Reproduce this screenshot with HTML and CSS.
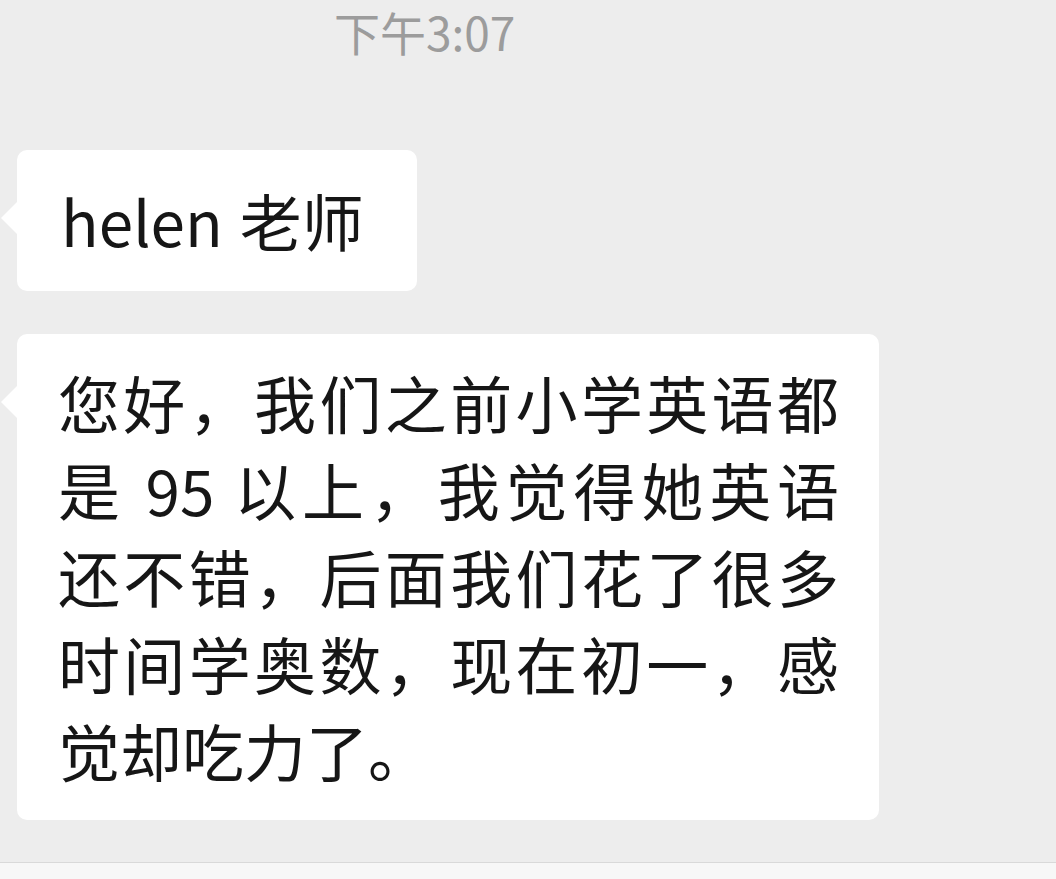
FILE: index.html
```html
<!DOCTYPE html>
<html lang="zh-CN">
<head>
<meta charset="utf-8">
<title>聊天</title>
<link rel="stylesheet" href="styles.css">
</head>
<body>
  <main class="chat">
    <div class="time">下午3:07</div>
    <div class="bubble bubble-short">helen 老师</div>
    <div class="bubble bubble-long">
      <p class="line">您好，我们之前小学英语都</p>
      <p class="line">是 95 以上，我觉得她英语</p>
      <p class="line">还不错，后面我们花了很多</p>
      <p class="line">时间学奥数，现在初一，感</p>
      <p class="line last">觉却吃力了。</p>
    </div>
  </main>
  <footer class="inputbar"></footer>
</body>
</html>
```
FILE: styles.css
```css
* { box-sizing: border-box; }

html, body {
  margin: 0;
  padding: 0;
}

body {
  width: 1056px;
  height: 879px;
  overflow: hidden;
  background: #ededed;
  font-family: "Noto Sans CJK SC", "Noto Sans", sans-serif;
  color: #161616;
  display: flex;
  flex-direction: column;
}

.chat {
  flex: 1;
  display: flex;
  flex-direction: column;
  align-items: flex-start;
  padding-top: 1px;
}

.time {
  padding-left: 334px;
  font-size: 46px;
  line-height: 60px;
  color: #9c9c9c;
  margin-bottom: 89px;
}

.bubble {
  position: relative;
  margin-left: 17px;
  background: #ffffff;
  border-radius: 10px;
  font-size: 62px;
  line-height: 87px;
}

.bubble::before {
  content: "";
  position: absolute;
  left: -16px;
  top: 51px;
  border-top: 17px solid transparent;
  border-bottom: 17px solid transparent;
  border-right: 17px solid #ffffff;
}

.bubble-short {
  padding: 27px 53px 27px 44px;
  word-spacing: 3px;
}

.bubble-long {
  margin-top: 43px;
  width: 862px;
  padding: 25px 40px 26px 41px;
}

.line {
  margin: 0;
  white-space: nowrap;
  text-align: justify;
  text-align-last: justify;
}

.line.last {
  text-align-last: auto;
}

.inputbar {
  height: 17px;
  flex-shrink: 0;
  border-top: 1px solid #d9d9d9;
  background: #f7f7f7;
}
```
